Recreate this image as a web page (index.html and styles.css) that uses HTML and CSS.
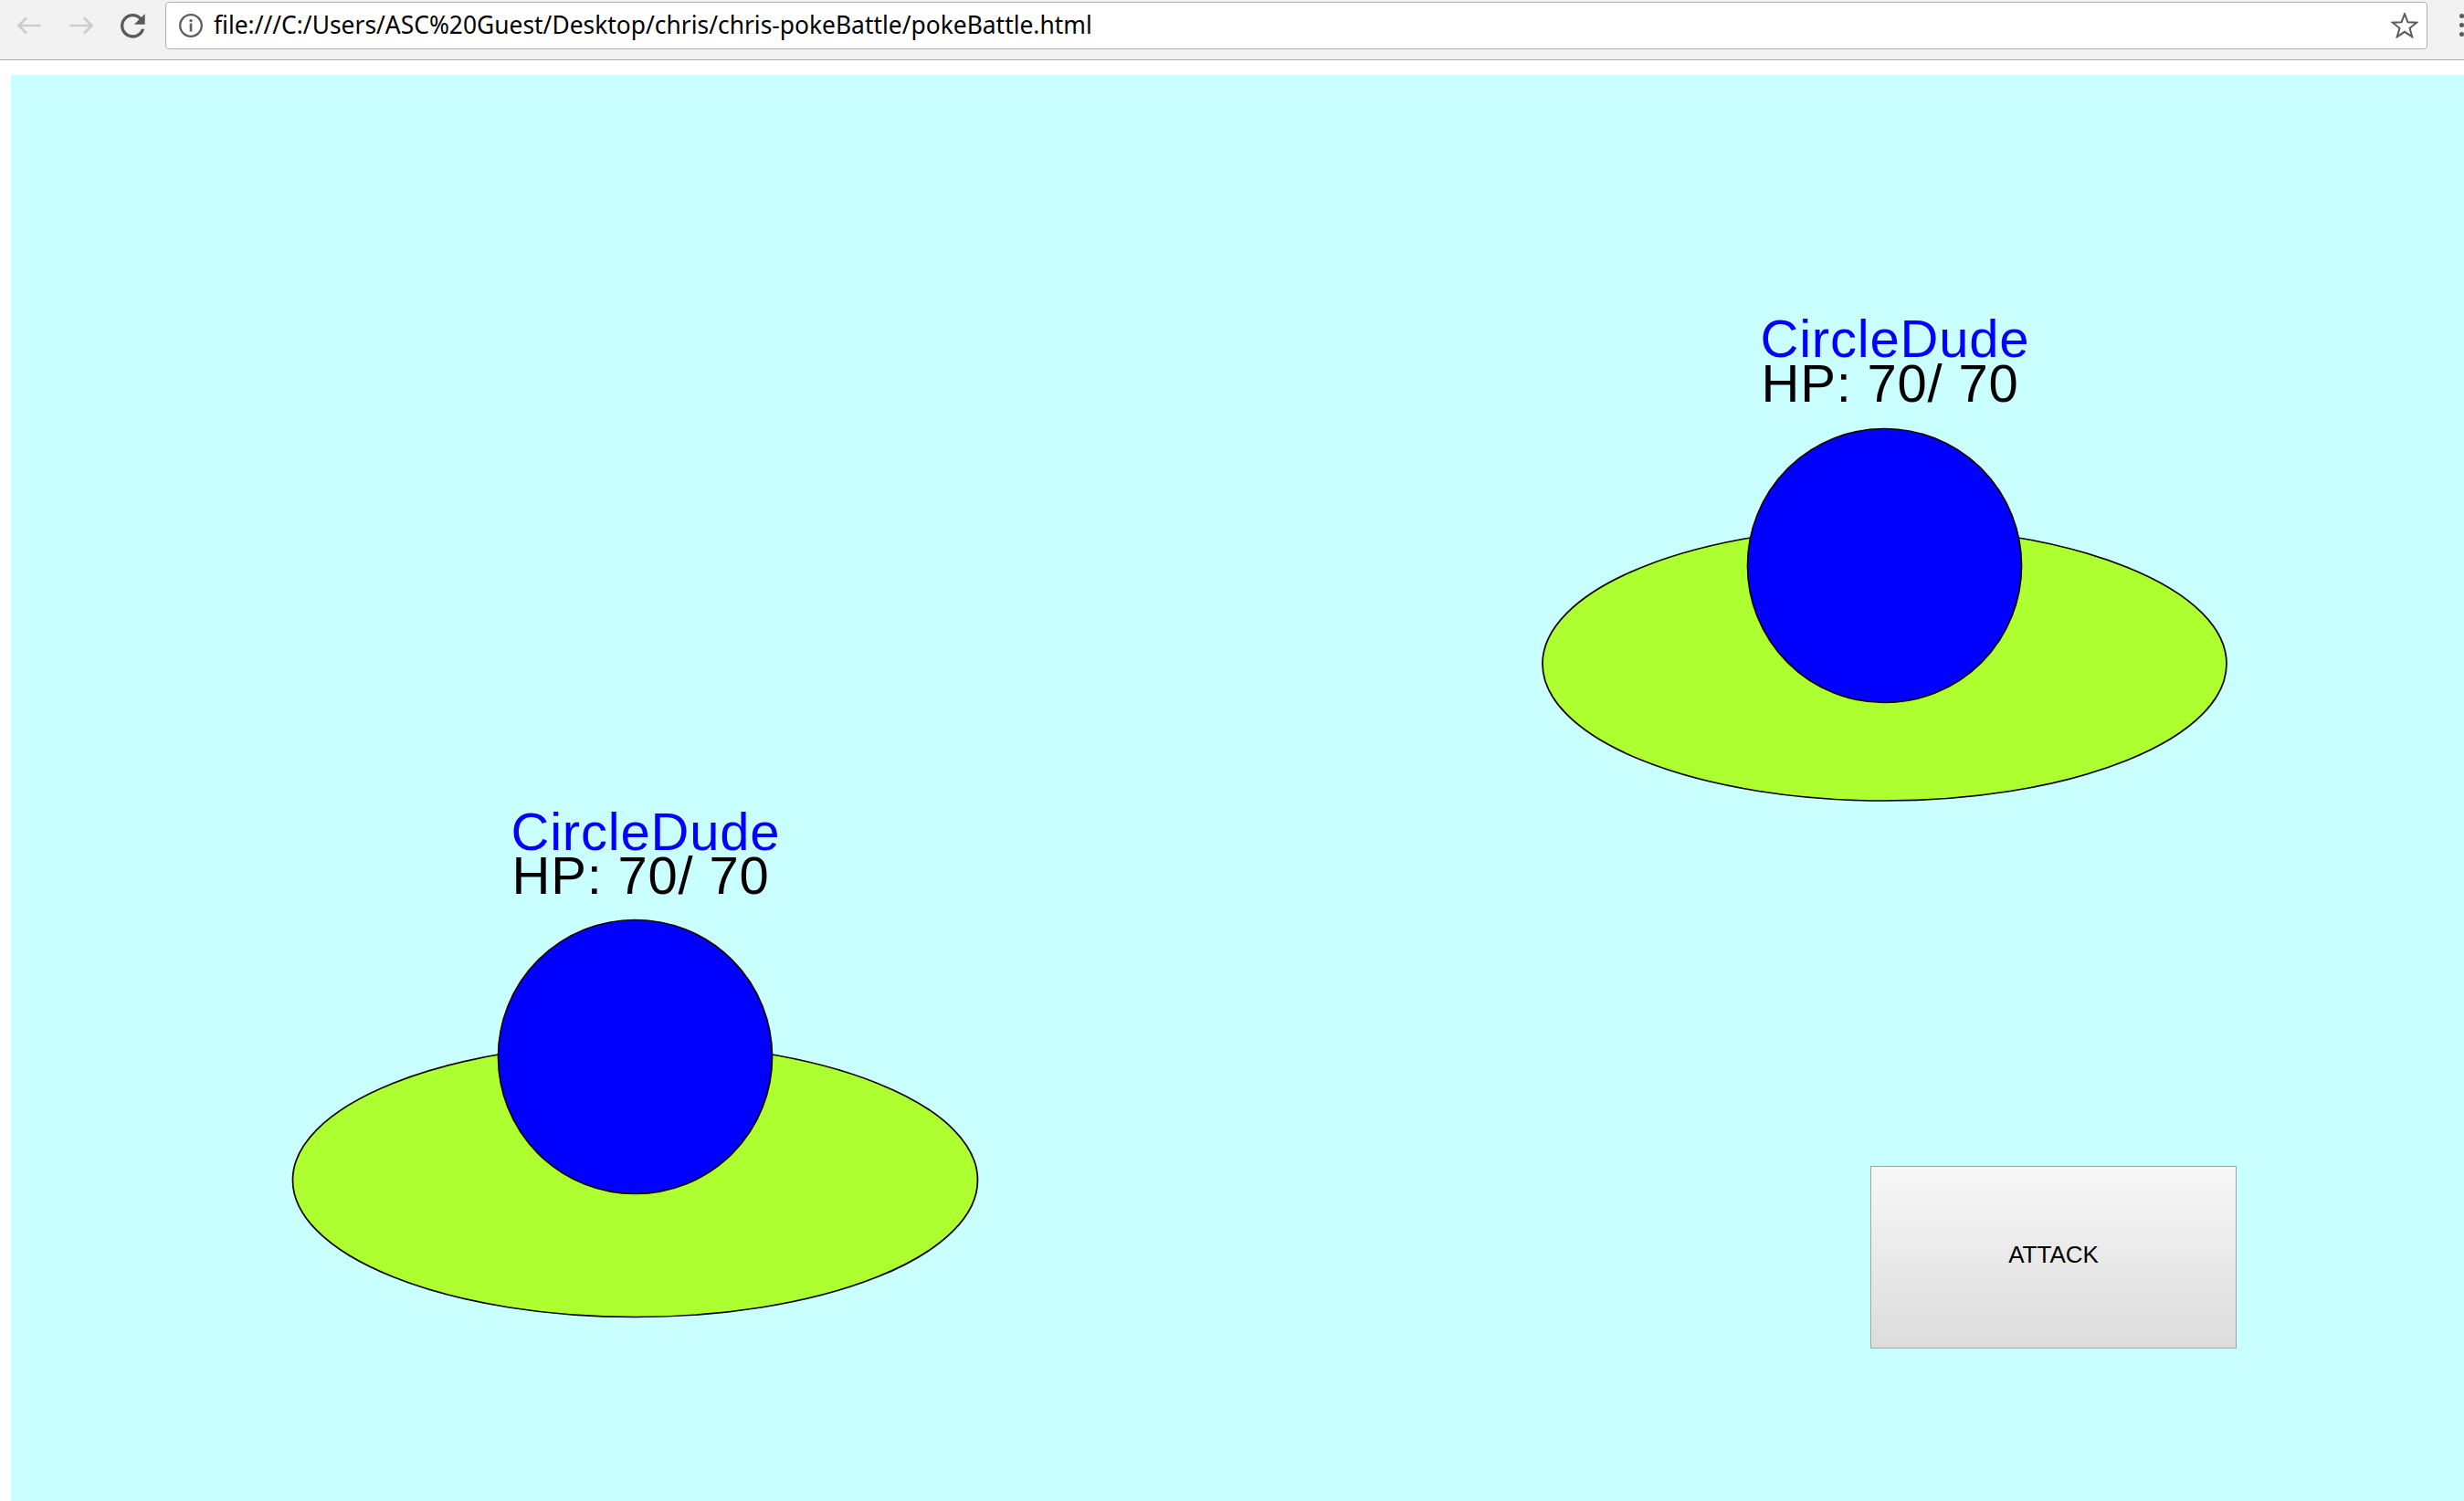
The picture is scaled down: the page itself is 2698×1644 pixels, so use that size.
FILE: index.html
```html
<!DOCTYPE html>
<html>
<head>
<meta charset="utf-8">
<title>pokeBattle</title>
<link rel="stylesheet" href="styles.css">
</head>
<body>
<div class="toolbar">
  <div class="nav-btn">
    <svg class="arrow" width="28" height="20" viewBox="0 0 28 20"><path d="M26.5 10H2.5M11 1.5L2.5 10L11 18.5"/></svg>
  </div>
  <div class="nav-btn">
    <svg class="arrow" width="28" height="20" viewBox="0 0 28 20"><path d="M1.5 10H25.5M17 1.5L25.5 10L17 18.5"/></svg>
  </div>
  <div class="nav-btn">
    <svg class="reload" width="27" height="27" viewBox="4 4 16.2 16.2"><path d="M17.65 6.35C16.2 4.9 14.21 4 12 4c-4.42 0-7.990 3.58-7.99 8s3.57 8 7.99 8c3.73 0 6.84-2.55 7.73-6h-2.08c-.82 2.33-3.04 4-5.65 4-3.31 0-6-2.69-6-6s2.69-6 6-6c1.66 0 3.14.69 4.22 1.78L13 11h7V4l-2.35 2.35z"/></svg>
  </div>
  <div class="omnibox">
    <svg class="info" width="28" height="28" viewBox="0 0 28 28"><circle cx="14" cy="14" r="11.8"/><circle class="fill" cx="14" cy="8.6" r="1.7"/><rect class="fill" x="12.7" y="11.6" width="2.6" height="9"/></svg>
    <span class="url">file:///C:/Users/ASC%20Guest/Desktop/chris/chris-pokeBattle/pokeBattle.html</span>
    <svg class="star" width="30" height="28" viewBox="0 0 30 28"><polygon points="15,1 18.41,10.31 28.31,10.67 20.52,16.79 23.23,26.33 15,20.8 6.77,26.33 9.48,16.79 1.69,10.67 11.59,10.31"/></svg>
  </div>
  <div class="menu"><span class="dot"></span><span class="dot"></span><span class="dot"></span></div>
</div>

<div class="stage">
  <svg class="scene" width="2686" height="1562" viewBox="0 0 2686 1562">
    <ellipse class="platform" cx="2051.5" cy="645" rx="374.5" ry="150"/>
    <circle class="dude" cx="2051.5" cy="537.5" r="150"/>
    <text class="name" x="1915.5" y="309">CircleDude</text>
    <text class="hp" x="1916.5" y="358">HP: 70/ 70</text>

    <ellipse class="platform" cx="683.5" cy="1210.5" rx="375" ry="150"/>
    <circle class="dude" cx="683.5" cy="1075.5" r="150"/>
    <text class="name" x="547.5" y="849">CircleDude</text>
    <text class="hp" x="548.5" y="896.5">HP: 70/ 70</text>
  </svg>
  <button class="attack"><span class="attack-label">ATTACK</span></button>
</div>
</body>
</html>
```

FILE: styles.css
```css
html, body {
  margin: 0;
  padding: 0;
}
body {
  width: 2698px;
  height: 1644px;
  overflow: hidden;
  background: #ffffff;
  font-family: "Liberation Sans", Arial, sans-serif;
}
.toolbar {
  background: #f2f2f2;
  border-bottom: 1px solid #ababab;
  display: flex;
  align-items: flex-start;
  padding: 2px 0 0 3px;
  box-sizing: content-box;
  height: 63px;
}
.nav-btn {
  width: 57px;
  height: 52px;
  display: flex;
  align-items: center;
  justify-content: center;
}
.arrow path {
  fill: none;
  stroke: #cdcdcd;
  stroke-width: 2.6;
}
.reload path {
  fill: #5a5a5a;
}
.omnibox {
  margin-left: 7px;
  width: 2477px;
  height: 52px;
  box-sizing: border-box;
  background: #ffffff;
  border: 1px solid #b2b2b2;
  border-radius: 4px;
  display: flex;
  align-items: center;
  padding-left: 13px;
  padding-right: 9px;
}
.info circle {
  fill: none;
  stroke: #5f5f5f;
  stroke-width: 2.3;
}
.info .fill {
  fill: #5f5f5f;
  stroke: none;
}
.url {
  margin-left: 11px;
  font-family: "Noto Sans", "Open Sans", sans-serif;
  font-size: 26.4px;
  color: #000000;
  flex: 1;
  white-space: nowrap;
  line-height: 1;
  position: relative;
  top: -1px;
}
.star polygon {
  fill: none;
  stroke: #5a5a5a;
  stroke-width: 2;
  stroke-linejoin: miter;
}
.menu {
  margin-left: 35px;
  height: 52px;
  display: flex;
  flex-direction: column;
  justify-content: center;
  gap: 5px;
  position: relative;
  top: -1px;
}
.dot {
  display: block;
  width: 5px;
  height: 5px;
  border-radius: 50%;
  background: #5a5a5a;
}
.stage {
  position: relative;
  margin: 16px 0 0 12px;
  width: 2686px;
  height: 1562px;
  background: #caffff;
}
.scene {
  display: block;
}
.platform {
  fill: #adff2f;
  stroke: #000000;
  stroke-width: 1.7;
}
.dude {
  fill: #0000ff;
  stroke: #000000;
  stroke-width: 1.7;
}
.name, .hp {
  font-family: "Liberation Sans", Arial, sans-serif;
  font-size: 58px;
  letter-spacing: 0.8px;
}
.name {
  fill: #0000ff;
}
.hp {
  fill: #000000;
}
.attack {
  position: absolute;
  left: 2036px;
  top: 1195px;
  width: 401px;
  height: 200px;
  box-sizing: border-box;
  border: 1px solid #a3a3a3;
  border-radius: 0;
  background: linear-gradient(to bottom, #f7f7f7, #dcdcdc);
  font-family: "Liberation Sans", Arial, sans-serif;
  font-size: 26px;
  color: #000000;
  padding: 0;
  display: flex;
  align-items: center;
  justify-content: center;
}
.attack-label {
  position: relative;
  top: -3px;
}
```
